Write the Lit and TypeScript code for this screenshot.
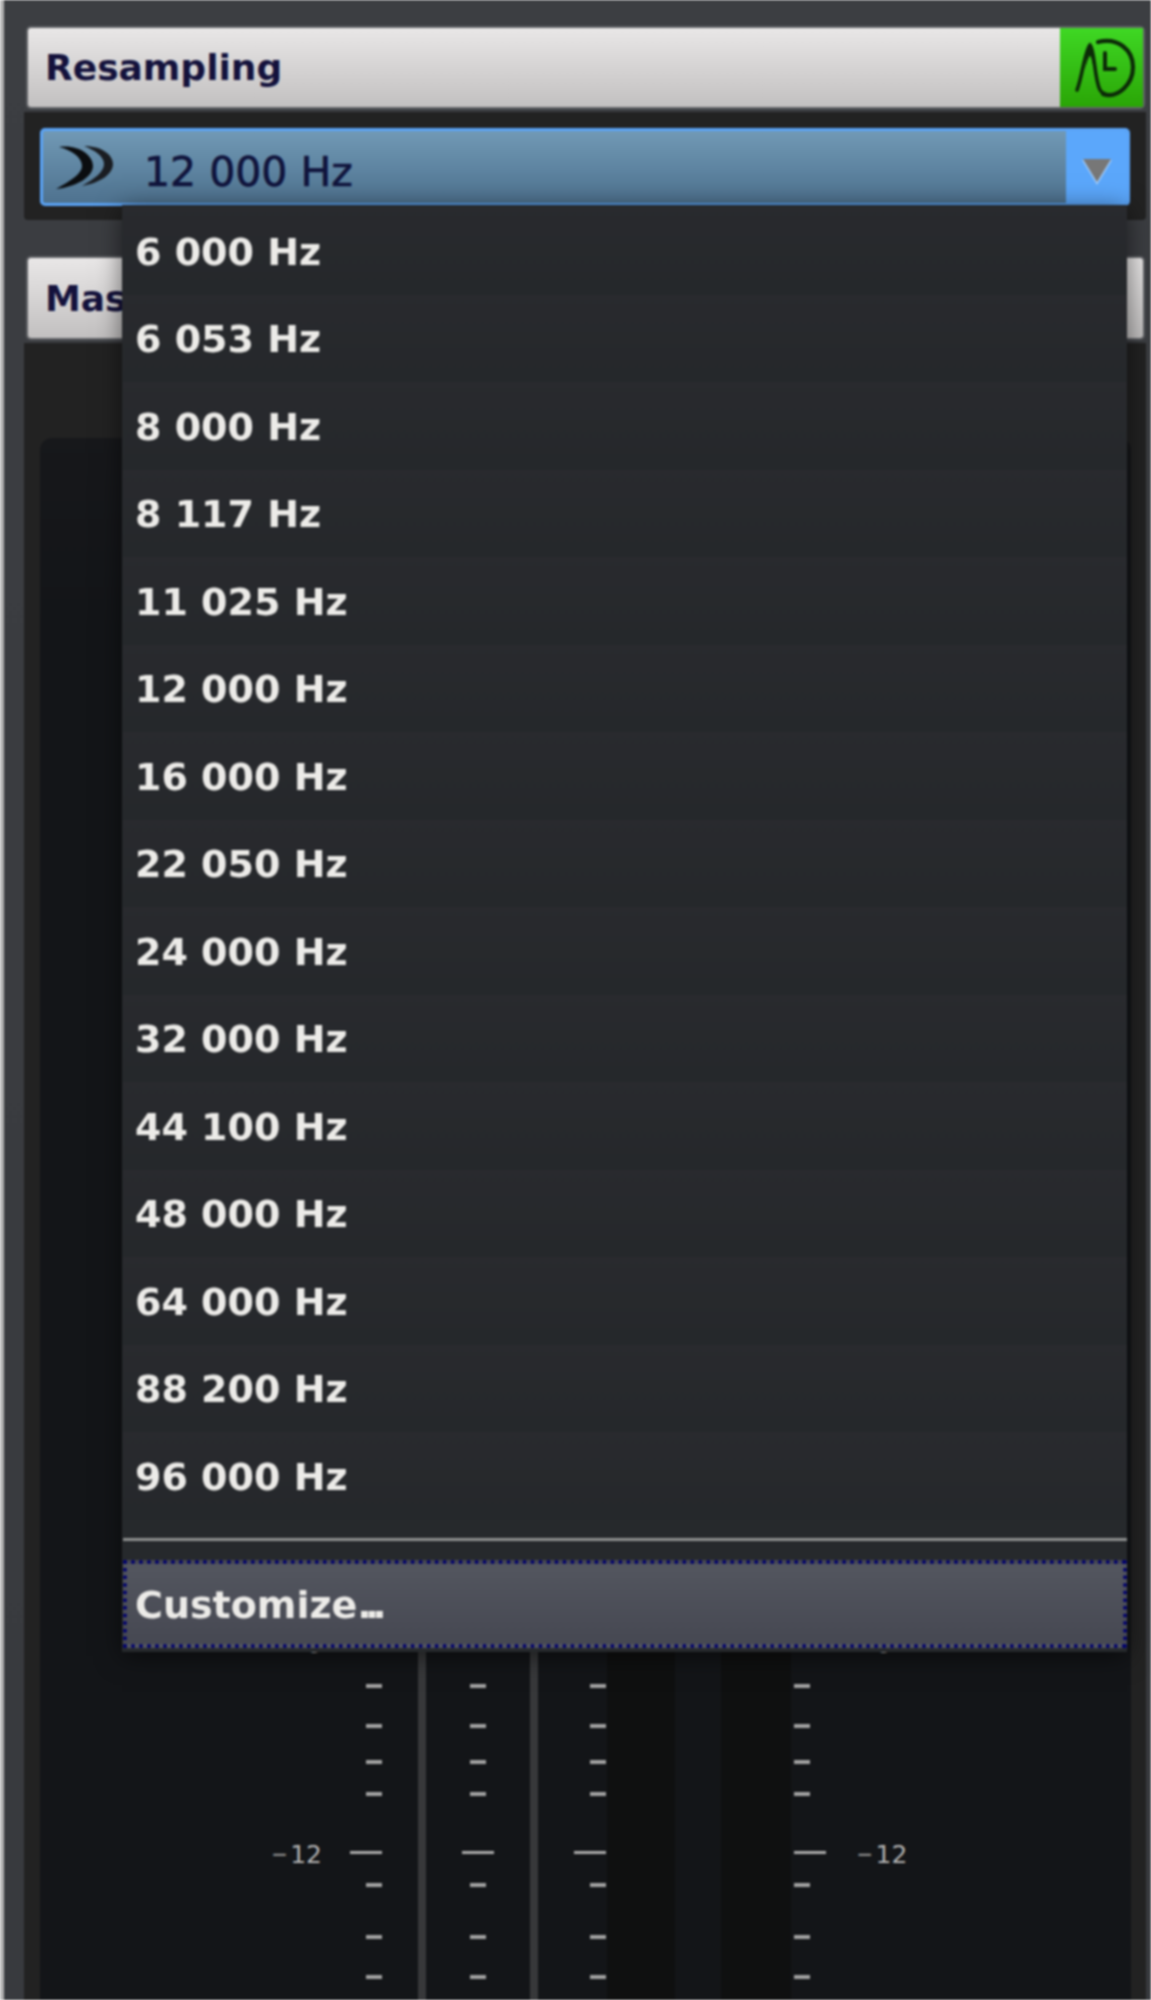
import { LitElement, html, css, svg } from 'lit';
import { customElement } from 'lit/decorators.js';

const RATES = [
  '6 000 Hz', '6 053 Hz', '8 000 Hz', '8 117 Hz', '11 025 Hz',
  '12 000 Hz', '16 000 Hz', '22 050 Hz', '24 000 Hz', '32 000 Hz',
  '44 100 Hz', '48 000 Hz', '64 000 Hz', '88 200 Hz', '96 000 Hz',
];

// tick centres, px from the top of the meter box
const TICKS = [1248, 1288, 1324, 1356, 1447, 1499, 1539];
const MAJOR_TICK = 1415;

const logo = svg`
  <svg class="logo" width="83" height="79" viewBox="0 0 83 79" fill="none" stroke="#0c2a08" stroke-linecap="round">
    <path d="M17 62C22 50 25 22 30 17C35 22 34 50 40 62C41 64 42 65 45 66" stroke-width="3.6"/>
    <path d="M25 42C27 30 28 22 30 17C33 22 33 32 34 42C32 32 31 28 30 28C29 28 27 34 25 42Z" fill="#0c2a08" stroke="none"/>
    <path d="M38 14C58 9 73 22 73 39C73 56 58 71 43 66" stroke-width="4.2"/>
    <path d="M45 25V41H55" stroke-width="4"/>
  </svg>`;

const chevrons = svg`
  <svg class="chevrons" width="60" height="48" viewBox="0 0 60 48">
    <path d="M3 4C22 1 37 12 37 23C37 34 20 44 0 46C14 38 26 31 26 23C26 14 15 7 3 4Z" fill="#0b0d10"/>
    <path d="M28 3C46 3 57 12 57 21C57 31 44 40 26 43C38 36 48 29 48 21C48 13 38 7 28 3Z" fill="#1a1d22"/>
  </svg>`;

@customElement('app-root')
export class AppRoot extends LitElement {
  static styles = css`
    :host {
      display: block;
      width: 1151px;
      height: 2000px;
      overflow: hidden;
      font-family: 'DejaVu Sans', sans-serif;
    }

    .app {
      position: relative;
      display: flex;
      height: 2000px;
      background: linear-gradient(#3c3e42, #383a3e);
      filter: blur(0.8px);
    }

    .edge {
      width: 4px;
      background: #b4b4b4;
    }

    .content {
      flex: 1;
      display: flex;
      flex-direction: column;
      padding: 28px 5px 0 20px;
      min-width: 0;
    }

    .header {
      display: flex;
      align-items: center;
      justify-content: space-between;
      height: 79px;
      margin: 0 3px 0 4px;
      padding-left: 17px;
      color: #14123c;
      font-size: 36px;
      font-weight: 700;
      background: linear-gradient(#e9e7e7, #c2c0c0);
      box-shadow: 0 0 0 2px #606266;
      border-radius: 3px;
    }

    .master {
      margin-top: 38px;
      height: 80px;
    }

    .badge {
      width: 83px;
      height: 79px;
      background: linear-gradient(#3fd824, #2aa506);
    }

    .panel {
      margin-top: 5px;
      background: #222222;
    }

    .panel-top {
      height: 108px;
      padding: 16px;
      box-sizing: border-box;
      border-radius: 0 0 4px 4px;
    }

    .panel-main {
      flex: 1;
      padding: 95px 15px 0 16px;
    }

    .select {
      display: flex;
      align-items: center;
      height: 78px;
      box-sizing: border-box;
      border: 3px solid #5aa3f6;
      border-radius: 5px;
      background: linear-gradient(#7199b5, #4e728f);
      overflow: hidden;
    }

    .chevrons {
      margin-left: 13px;
      flex: none;
    }

    .select-value {
      flex: 1;
      margin: 10px 0 0 28px;
      color: #10143c;
      font-size: 41px;
      -webkit-text-stroke: 0.7px #10143c;
    }

    .select-arrow {
      display: flex;
      align-items: center;
      justify-content: center;
      width: 61px;
      height: 100%;
      background: #5ba7fb;
    }

    .select-arrow svg {
      margin-top: 10px;
    }

    .meter {
      display: flex;
      height: 100%;
      background: linear-gradient(#17181b, #131518 200px);
      border-radius: 12px 12px 0 0;
      color: #b4b4b4;
      font-size: 25px;
    }

    .scale {
      position: relative;
      flex: none;
      width: 32px;
    }

    .tick {
      position: absolute;
      right: 0;
      width: 16px;
      height: 4px;
      margin-top: -2px;
      background: #a2a2a2;
    }

    .tick.major {
      width: 32px;
      height: 3px;
      background: #ababab;
    }

    .scale.center .tick { right: 8px; }
    .scale.center .tick.major { right: 0; }
    .scale.right .tick { left: 0; right: auto; }

    .scale-l { margin-left: 310px; }
    .scale-c { margin-left: 36px; }
    .scale-r1 { margin-left: 36px; }
    .scale-r2 { margin-left: 3px; }

    .divider {
      flex: none;
      width: 8px;
      margin-left: 36px;
      background: #37383a;
    }

    .band {
      flex: none;
      background: #0f1010;
    }

    .band-a {
      width: 68px;
      margin-left: 1px;
    }

    .band-b {
      width: 70px;
      margin-left: 46px;
    }

    .label {
      position: absolute;
      white-space: nowrap;
      line-height: 30px;
    }

    .label.left { right: 60px; }
    .label.right { left: 63px; }

    .dash {
      margin-right: 3px;
      font-size: 31px;
      line-height: 20px;
      color: #8a8a8a;
    }

    .menu {
      position: absolute;
      left: 122px;
      top: 205px;
      width: 1005px;
      height: 1447px;
      box-sizing: border-box;
      padding: 2px 0 3px 1px;
      display: flex;
      flex-direction: column;
      background: #26292c;
      box-shadow: 0 4px 24px rgba(0, 0, 0, 0.55);
    }

    .item {
      flex: none;
      display: flex;
      align-items: center;
      height: 87.5px;
      box-sizing: border-box;
      padding: 2px 0 0 12px;
      color: #ecebe8;
      font-size: 38px;
      font-weight: 700;
      background: linear-gradient(#292a2e, #25282b);
    }

    .separator {
      height: 3px;
      margin-top: 18px;
      background: #8d8f8f;
    }

    .item.custom {
      height: 88px;
      margin-top: 19px;
      padding-left: 8px;
      border: 4px dotted #00006e;
      background: linear-gradient(#53565f, #464852);
    }

    .dots {
      letter-spacing: -7px;
    }
  `;

  renderTicks() {
    return html`
      ${TICKS.map((t) => html`<div class="tick" style="top:${t}px"></div>`)}
      <div class="tick major" style="top:${MAJOR_TICK}px"></div>
    `;
  }

  renderLabels(side: string) {
    return html`
      <div class="label ${side}" style="top:1192px"><span class="dash">–</span>6</div>
      <div class="label ${side}" style="top:${MAJOR_TICK - 13}px"><span class="dash">–</span>12</div>
    `;
  }

  render() {
    return html`
      <div class="app">
        <div class="edge"></div>
        <div class="content">
          <div class="header">
            <span>Resampling</span>
            <div class="badge">${logo}</div>
          </div>
          <div class="panel panel-top">
            <div class="select">
              ${chevrons}
              <span class="select-value">12 000 Hz</span>
              <div class="select-arrow">
                <svg width="32" height="28" viewBox="0 0 32 28">
                  <path d="M1 2H31L16 27Z" fill="#cfe2f8" opacity="0.6"/>
                  <path d="M2 1H30L16 24Z" fill="#777777"/>
                </svg>
              </div>
            </div>
          </div>
          <div class="header master"><span>Master</span></div>
          <div class="panel panel-main">
            <div class="meter">
              <div class="scale scale-l">${this.renderLabels('left')}${this.renderTicks()}</div>
              <div class="divider"></div>
              <div class="scale center scale-c">${this.renderTicks()}</div>
              <div class="divider"></div>
              <div class="scale scale-r1">${this.renderTicks()}</div>
              <div class="band band-a"></div>
              <div class="band band-b"></div>
              <div class="scale right scale-r2">${this.renderLabels('right')}${this.renderTicks()}</div>
            </div>
          </div>
        </div>
        <div class="menu">
          ${RATES.map((r) => html`<div class="item">${r}</div>`)}
          <div class="separator"></div>
          <div class="item custom"><span>Customize<span class="dots">...</span></span></div>
        </div>
      </div>
    `;
  }
}
